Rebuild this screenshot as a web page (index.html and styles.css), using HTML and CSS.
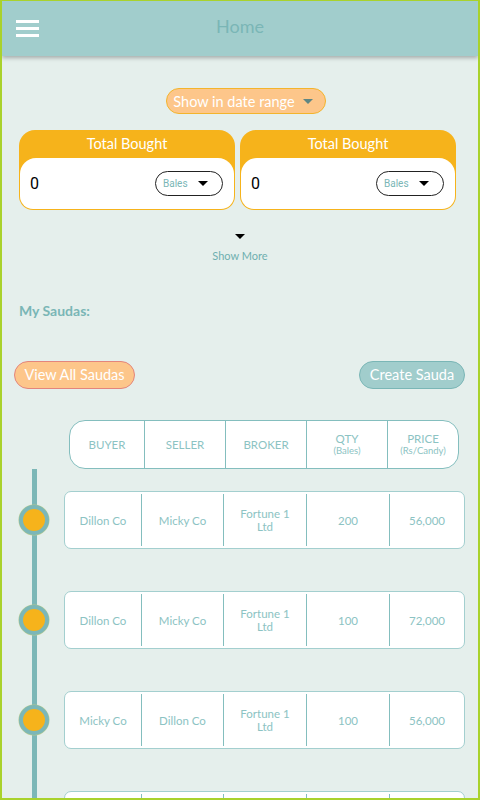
FILE: index.html
```html
<!DOCTYPE html>
<html>
<head>
<meta charset="utf-8">
<title>Home</title>
<link rel="stylesheet" href="styles.css">
</head>
<body>
<div class="app">
  <header class="topbar">
    <div class="burger"><span></span><span></span><span></span></div>
    <h1 class="title">Home</h1>
    <div></div>
  </header>

  <main class="content">
    <div class="range-row">
      <button class="range-pill">Show in date range <span class="tri tri-dark"></span></button>
    </div>

    <div class="cards">
      <div class="card">
        <div class="card-title">Total Bought</div>
        <div class="card-body">
          <span class="card-value">0</span>
          <div class="select"><span>Bales</span><span class="tri tri-black"></span></div>
        </div>
      </div>
      <div class="card">
        <div class="card-title">Total Bought</div>
        <div class="card-body">
          <span class="card-value">0</span>
          <div class="select"><span>Bales</span><span class="tri tri-black"></span></div>
        </div>
      </div>
    </div>

    <div class="show-more">
      <span class="tri tri-black"></span>
      <span class="show-more-text">Show More</span>
    </div>

    <h2 class="section-title">My Saudas:</h2>

    <div class="actions">
      <button class="btn btn-orange">View All Saudas</button>
      <button class="btn btn-teal">Create Sauda</button>
    </div>

    <div class="thead">
      <div class="th">BUYER</div>
      <div class="th">SELLER</div>
      <div class="th">BROKER</div>
      <div class="th">QTY<small>(Bales)</small></div>
      <div class="th">PRICE<small>(Rs/Candy)</small></div>
    </div>

    <div class="timeline">
      <div class="trow">
        <span class="dot"></span>
        <div class="rcard">
          <div class="td">Dillon Co</div>
          <div class="td">Micky Co</div>
          <div class="td">Fortune 1<br>Ltd</div>
          <div class="td">200</div>
          <div class="td">56,000</div>
        </div>
      </div>
      <div class="trow">
        <span class="dot"></span>
        <div class="rcard">
          <div class="td">Dillon Co</div>
          <div class="td">Micky Co</div>
          <div class="td">Fortune 1<br>Ltd</div>
          <div class="td">100</div>
          <div class="td">72,000</div>
        </div>
      </div>
      <div class="trow">
        <span class="dot"></span>
        <div class="rcard">
          <div class="td">Micky Co</div>
          <div class="td">Dillon Co</div>
          <div class="td">Fortune 1<br>Ltd</div>
          <div class="td">100</div>
          <div class="td">56,000</div>
        </div>
      </div>
      <div class="trow">
        <span class="dot"></span>
        <div class="rcard">
          <div class="td"></div>
          <div class="td"></div>
          <div class="td"></div>
          <div class="td"></div>
          <div class="td"></div>
        </div>
      </div>
    </div>
  </main>
</div>
</body>
</html>
```

FILE: styles.css
```css
* { box-sizing: border-box; }

html, body {
  margin: 0;
  padding: 0;
}

body {
  width: 480px;
  height: 800px;
  overflow: hidden;
  font-family: Lato, "Open Sans", sans-serif;
}

.app {
  width: 480px;
  height: 800px;
  border: 2px solid #a9d22c;
  border-top-width: 1px;
  background: #e5efec;
  overflow: hidden;
  display: flex;
  flex-direction: column;
}

.topbar {
  flex: 0 0 55px;
  height: 55px;
  background: #a1cdcc;
  box-shadow: 0 2px 4px rgba(0, 0, 0, 0.28);
  display: grid;
  grid-template-columns: 1fr auto 1fr;
  align-items: center;
  position: relative;
  z-index: 2;
}

.burger {
  margin-left: 14px;
  width: 23px;
  display: flex;
  flex-direction: column;
  gap: 4px;
}

.burger span {
  display: block;
  height: 3px;
  background: #fff;
}

.title {
  margin: -6px 0 0;
  font-size: 18px;
  font-weight: 400;
  color: #7ab6b6;
}

.content {
  flex: 1;
  position: relative;
}

.range-row {
  display: flex;
  justify-content: center;
  padding-left: 12px;
  margin-top: 32px;
}

.range-pill {
  height: 26px;
  padding: 0 12px 0 6px;
  border: 1px solid #f3b42c;
  border-radius: 13px;
  background: #fdc68a;
  color: #fff;
  font-family: Lato, sans-serif;
  font-size: 14.5px;
  display: flex;
  align-items: center;
  gap: 8px;
}

.tri {
  display: inline-block;
  width: 0;
  height: 0;
  border-left: 5px solid transparent;
  border-right: 5px solid transparent;
  border-top: 5px solid #000;
}

.tri-dark { border-top-color: #5f8683; }
.tri-black { border-top-color: #000; }

.cards {
  display: grid;
  grid-template-columns: 216px 216px;
  gap: 5px;
  margin: 16px 0 0 17px;
}

.card {
  background: #f6b31b;
  border-radius: 16px 16px 14px 14px;
  padding: 1px;
}

.card-title {
  height: 27px;
  display: flex;
  align-items: center;
  justify-content: center;
  padding-bottom: 3px;
  color: #fff;
  font-size: 14.5px;
}

.card-body {
  height: 51px;
  background: #fff;
  border-radius: 16px 16px 13px 13px;
  display: flex;
  align-items: center;
  justify-content: space-between;
  padding: 0 11px 0 10px;
}

.card-value {
  font-family: Roboto, sans-serif;
  font-size: 16px;
  color: #000;
}

.select {
  width: 68px;
  height: 25px;
  border: 1.3px solid #222;
  border-radius: 13px;
  display: flex;
  align-items: center;
  justify-content: space-between;
  padding: 0 14px 0 7px;
  font-family: Roboto, sans-serif;
  font-size: 10px;
  color: #7ab6b6;
}

.show-more {
  display: flex;
  flex-direction: column;
  align-items: center;
  margin-top: 24px;
  gap: 10px;
}

.show-more-text {
  font-size: 11px;
  color: #6fb0b0;
}

.section-title {
  margin: 40px 0 0 17px;
  font-size: 14px;
  font-weight: 700;
  color: #7ab6b6;
}

.actions {
  display: flex;
  justify-content: space-between;
  margin: 42px 13px 0 12px;
}

.btn {
  height: 28px;
  border-radius: 14px;
  color: #fff;
  font-family: Lato, sans-serif;
  font-size: 14.5px;
  padding: 0 4px 2px;
}

.btn-orange {
  width: 121px;
  background: #fdc68a;
  border: 1px solid #e3857c;
}

.btn-teal {
  width: 106px;
  background: #a1cdcc;
  border: 1px solid #7ab6b6;
}

.thead {
  margin: 31px 0 0 67px;
  width: 390px;
  height: 49px;
  background: #fff;
  border: 1.3px solid #84bebe;
  border-radius: 16px;
  display: grid;
  grid-template-columns: 74px 81px 81px 81px 1fr;
}

.th {
  display: flex;
  flex-direction: column;
  align-items: center;
  justify-content: center;
  font-size: 11.5px;
  color: #8cc3c3;
  border-left: 1.5px solid #84bebe;
  line-height: 13px;
}

.th:first-child { border-left: none; }

.th small {
  font-size: 9.5px;
  line-height: 12px;
}

.timeline {
  position: relative;
  padding: 22px 0 0 17px;
  display: flex;
  flex-direction: column;
  gap: 42px;
}

.timeline::before {
  content: "";
  position: absolute;
  left: 29.5px;
  top: 0;
  bottom: -200px;
  width: 5px;
  background: #7cb7b7;
}

.trow {
  display: flex;
  align-items: center;
  gap: 15px;
  position: relative;
}

.dot {
  width: 30px;
  height: 30px;
  border-radius: 50%;
  background: #f6b31b;
  border: 4px solid #7cb7b7;
  box-shadow: 0 0 0 0.5px #b5c98f;
  flex: 0 0 30px;
}

.rcard {
  width: 401px;
  height: 58px;
  background: #fff;
  border: 1.3px solid #a3cfcf;
  border-radius: 7px;
  display: grid;
  grid-template-columns: 76px 82px 83px 83px 1fr;
  padding: 2px 0;
}

.td {
  display: flex;
  align-items: center;
  justify-content: center;
  text-align: center;
  font-size: 11.5px;
  line-height: 13px;
  color: #8cc3c3;
  border-left: 1.5px solid #84bebe;
}

.td:first-child { border-left: none; }
```
